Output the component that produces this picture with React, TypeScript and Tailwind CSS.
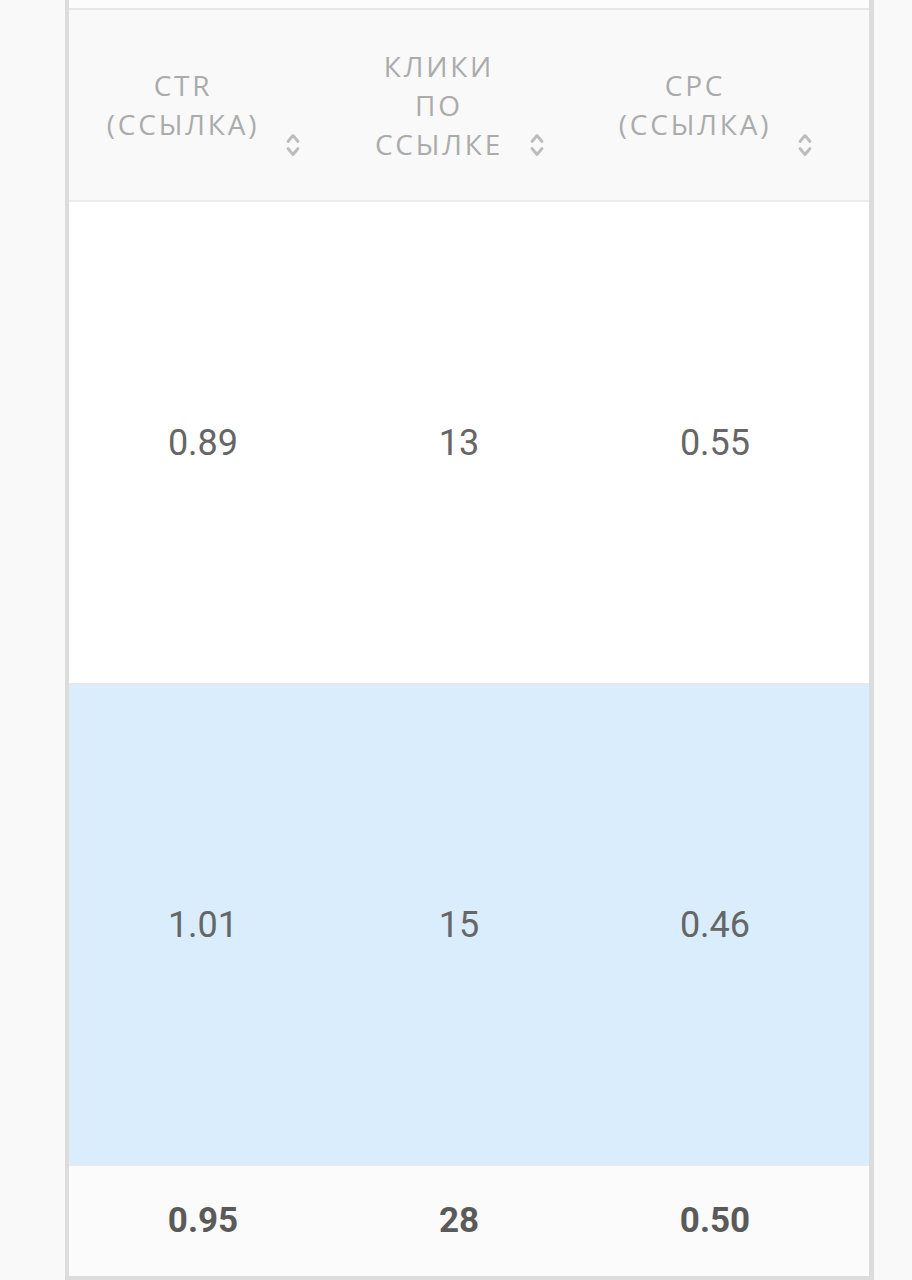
import React from "react";

function SortIcon() {
  return (
    <svg width="16" height="30" viewBox="0 0 16 30">
      <path d="M3 11.5 L8 5.5 L13 11.5" fill="none" stroke="#bcbcbc" strokeWidth="2.8" strokeLinecap="round" strokeLinejoin="round" />
      <path d="M3 18.5 L8 24.5 L13 18.5" fill="none" stroke="#bcbcbc" strokeWidth="2.8" strokeLinecap="round" strokeLinejoin="round" />
    </svg>
  );
}

function HeaderCell({ lines }: { lines: string[] }) {
  return (
    <div className="flex justify-center h-full">
      <div className="flex h-full items-center">
        <div
          className="text-center text-[28px] leading-[39px] tracking-[0.1em] text-[#ababab] uppercase"
          style={{ fontFamily: '"Open Sans", "Noto Sans", sans-serif' }}
        >
          {lines.map((l, i) => (
            <div key={i}>{l}</div>
          ))}
        </div>
        <div className="relative h-full w-[40px]">
          <div className="absolute left-[26px] top-[120px]">
            <SortIcon />
          </div>
        </div>
      </div>
    </div>
  );
}

export default function App() {
  const numFont = { fontFamily: 'Roboto, "Liberation Sans", sans-serif' };
  return (
    <div className="min-h-[1280px] w-[912px] bg-[#f9f9f9]">
      <div className="ml-[65px] w-[809px] border-l-[4px] border-r-[5px] border-b-[4px] border-[#dcdcdc]">
        <div className="h-[8px] bg-[#fcfcfc] border-b-[2px] border-[#e6e6e6] box-content" />
        <div className="h-[190px] bg-[#f9f9f9] border-b-[2px] border-[#ececec] box-content pl-[6px] grid grid-cols-[256px_256px_256px]">
          <HeaderCell lines={["CTR", "(ССЫЛКА)"]} />
          <HeaderCell lines={["КЛИКИ", "ПО", "ССЫЛКЕ"]} />
          <HeaderCell lines={["CPC", "(ССЫЛКА)"]} />
        </div>
        <div
          className="h-[481px] bg-white border-b-[2px] border-[#e8e8e8] box-content pl-[6px] grid grid-cols-[256px_256px_256px] items-center text-center text-[36px] text-[#666666]"
          style={numFont}
        >
          <div>0.89</div>
          <div>13</div>
          <div>0.55</div>
        </div>
        <div
          className="h-[479px] bg-[#d9edfc] border-b-[2px] border-[#e4ebf0] box-content pl-[6px] grid grid-cols-[256px_256px_256px] items-center text-center text-[36px] text-[#666666]"
          style={numFont}
        >
          <div>1.01</div>
          <div>15</div>
          <div>0.46</div>
        </div>
        <div
          className="h-[110px] bg-[#fbfbfb] pl-[6px] grid grid-cols-[256px_256px_256px] items-center text-center text-[35px] font-bold text-[#5a5a5a]"
          style={numFont}
        >
          <div>0.95</div>
          <div>28</div>
          <div>0.50</div>
        </div>
      </div>
    </div>
  );
}
